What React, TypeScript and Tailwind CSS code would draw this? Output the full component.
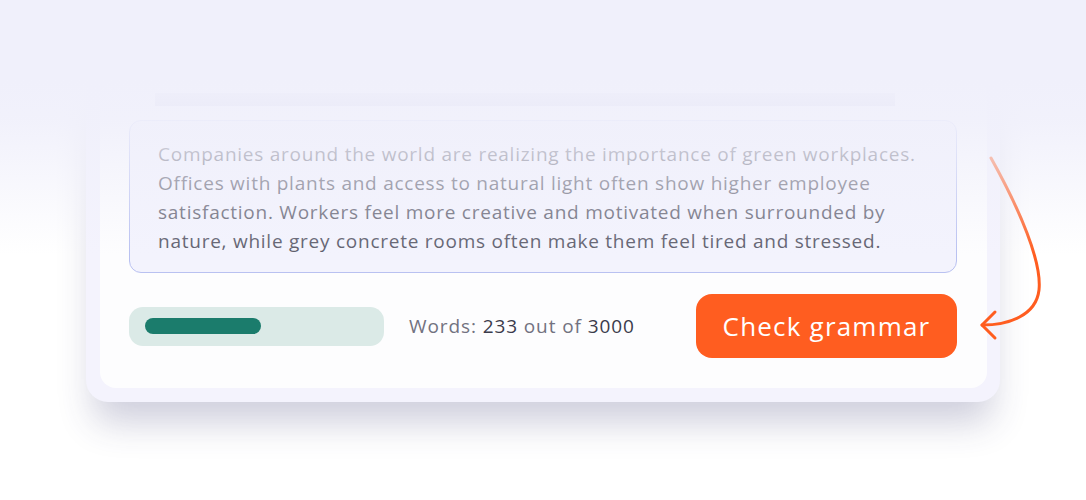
import React from "react";

const lines = [
  "Companies around the world are realizing the importance of green workplaces.",
  "Offices with plants and access to natural light often show higher employee",
  "satisfaction. Workers feel more creative and motivated when surrounded by",
  "nature, while grey concrete rooms often make them feel tired and stressed.",
];

function ProgressBar({ value }: { value: number }) {
  return (
    <div className="flex h-[39px] w-[255px] items-center rounded-[14px] bg-[#dbeae7] px-[16px]">
      <div className="h-[16px] rounded-full bg-[#1b7c6c]" style={{ width: `${value}%` }} />
    </div>
  );
}

function CurvedArrow() {
  return (
    <svg className="absolute left-0 top-0" width="1086" height="500" viewBox="0 0 1086 500" fill="none">
      <path
        d="M991 158 C1020 210 1042 262 1039 290 C1036 316 1008 325 982 325"
        stroke="#ff5d20"
        strokeWidth="3"
        strokeLinecap="round"
      />
      <path d="M995 312 L982 325 L995 338" stroke="#ff5d20" strokeWidth="3" strokeLinecap="round" strokeLinejoin="round" />
    </svg>
  );
}

export default function App() {
  const words = 233;
  const limit = 3000;

  return (
    <div className="relative h-[500px] w-[1086px] overflow-hidden bg-white font-['Open_Sans',sans-serif]">
      <div className="pt-[66px]">
        {/* card */}
        <div className="ml-[86px] w-[914px] rounded-[22px] bg-[#f4f3fd] p-[14px] pr-[13px] shadow-[0_28px_36px_-8px_rgba(50,52,110,0.24)]">
          <div className="rounded-[16px] bg-[#fdfdfe] px-[29px] pb-[30px] pt-[13px] pr-[30px]">
            {/* faded toolbar */}
            <div className="ml-[26px] h-[13px] w-[740px] bg-[#a8a8cc]" />

            <div className="mt-[14px] rounded-[12px] border border-[#b9c1f1] bg-[#f3f3fd] pb-[16px] pl-[28px] pt-[19px] text-[19px] leading-[29px] tracking-[0.75px] text-[#5c5c6b]">
              {lines.map((l) => (
                <div key={l} className="whitespace-nowrap">
                  {l}
                </div>
              ))}
            </div>

            <div className="mt-[21px] flex items-center">
              <ProgressBar value={52} />
              <p className="ml-[25px] text-[19px] tracking-[0.9px] text-[#727280]">
                Words: <span className="text-[#3b3b4b]">{words}</span> out of{" "}
                <span className="text-[#3b3b4b]">{limit}</span>
              </p>
              <button className="ml-auto h-[64px] w-[261px] rounded-[16px] bg-[#ff5d20] text-[26px] tracking-[1.2px] text-white">
                Check grammar
              </button>
            </div>
          </div>
        </div>
      </div>

      <CurvedArrow />

      {/* top fade */}
      <div className="pointer-events-none absolute inset-x-0 top-0 h-[255px] bg-[linear-gradient(to_bottom,#f0f0fb_0%,#f0f0fb_31%,rgba(240,240,251,0.92)_47%,rgba(240,240,251,0)_100%)]" />
    </div>
  );
}
